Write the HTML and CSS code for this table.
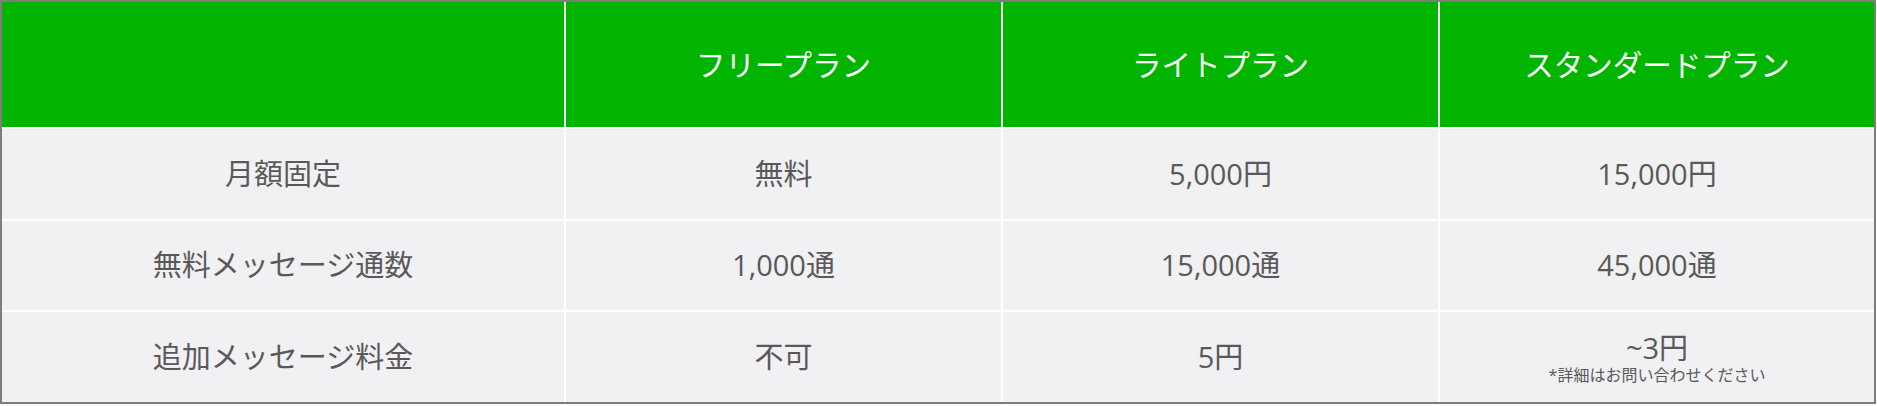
FILE: index.html
```html
<!DOCTYPE html>
<html lang="ja">
<head>
<meta charset="utf-8">
<link rel="stylesheet" href="styles.css">
</head>
<body>
<div class="plans">
  <div class="cell head"></div>
  <div class="cell head">フリープラン</div>
  <div class="cell head">ライトプラン</div>
  <div class="cell head">スタンダードプラン</div>

  <div class="cell">月額固定</div>
  <div class="cell">無料</div>
  <div class="cell">5,000円</div>
  <div class="cell">15,000円</div>

  <div class="cell">無料メッセージ通数</div>
  <div class="cell">1,000通</div>
  <div class="cell">15,000通</div>
  <div class="cell">45,000通</div>

  <div class="cell">追加メッセージ料金</div>
  <div class="cell">不可</div>
  <div class="cell">5円</div>
  <div class="cell stack"><span class="main">~3円</span><span class="note">*詳細はお問い合わせください</span></div>
</div>
</body>
</html>
```
FILE: styles.css
```css
html, body {
  margin: 0;
  padding: 0;
  background: #ffffff;
}
.plans {
  box-sizing: border-box;
  width: 1876px;
  height: 404px;
  border: 2px solid #7d7d7d;
  background: #ffffff;
  display: grid;
  grid-template-columns: 562px 435px 435px 1fr;
  grid-template-rows: 125px 90px 89px 1fr;
  gap: 2px;
  font-family: "Open Sans", "Noto Sans CJK JP", sans-serif;
}
.cell {
  background: #f1f0f3;
  color: #595959;
  font-size: 29px;
  display: flex;
  align-items: center;
  justify-content: center;
  line-height: 1.2;
}
.head {
  background: #00b400;
  color: #ffffff;
  font-size: 29.5px;
}
.stack {
  flex-direction: column;
  padding-top: 2px;
}
.main {
  display: block;
  line-height: 1;
}
.note {
  display: block;
  font-size: 16px;
  line-height: 1;
  margin-top: 5px;
}
```
